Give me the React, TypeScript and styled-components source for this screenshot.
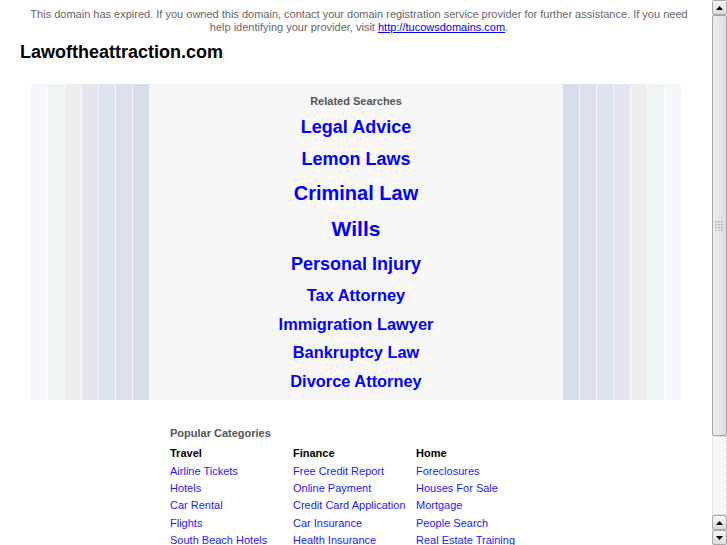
import React from "react";
import styled, { createGlobalStyle } from "styled-components";

const GlobalStyle = createGlobalStyle`
  html, body {
    margin: 0;
    padding: 0;
    overflow: hidden;
    background: #ffffff;
    font-family: "Liberation Sans", Arial, Helvetica, sans-serif;
  }
`;

const Page = styled.div`
  display: flex;
  width: 727px;
  height: 545px;
  overflow: hidden;
`;

const Main = styled.div`
  flex: 1;
  min-width: 0;
  overflow: hidden;
`;

const Notice = styled.div`
  padding: 8px 22px 0 28px;
  text-align: center;
  font-size: 11px;
  line-height: 13px;
  color: #666666;
  a {
    color: #0000ee;
    text-decoration: underline;
  }
`;

const Title = styled.h1`
  margin: 7px 0 0 0;
  padding-left: 20px;
  font-size: 18px;
  line-height: 22px;
  font-weight: bold;
  color: #000000;
`;

const Band = styled.div`
  display: flex;
  width: 650px;
  height: 316px;
  margin: 21px auto 0 auto;
`;

const Stripe = styled.div<{ $c: string; $side: "l" | "r" }>`
  width: 17px;
  flex: none;
  box-sizing: border-box;
  background: ${(p) => p.$c};
  ${(p) =>
    p.$side === "l"
      ? "border-right: 1px solid rgba(255,255,255,0.7);"
      : "border-left: 1px solid rgba(255,255,255,0.7);"}
`;

const Center = styled.div`
  flex: 1;
  background: #f7f7f7;
  display: flex;
  flex-direction: column;
  align-items: center;
  padding-top: 10px;
`;

const SectionHeading = styled.div`
  font-size: 11px;
  line-height: 14px;
  font-weight: bold;
  color: #555555;
  margin-bottom: 3px;
`;

const BigLink = styled.a<{ $size: number; $h: number }>`
  display: block;
  font-size: ${(p) => p.$size}px;
  line-height: ${(p) => p.$h}px;
  height: ${(p) => p.$h}px;
  font-weight: bold;
  color: #0000ff;
  text-decoration: none;
  white-space: nowrap;
`;

const Categories = styled.div`
  width: 372px;
  margin: 26px auto 0 auto;
`;

const CatHeading = styled.div`
  font-size: 11px;
  line-height: 14px;
  font-weight: bold;
  color: #555555;
  margin-bottom: 5px;
`;

const CatGrid = styled.div`
  display: grid;
  grid-template-columns: 123px 123px 123px;
`;

const CatColumn = styled.div`
  display: flex;
  flex-direction: column;
`;

const CatTitle = styled.div`
  font-size: 11px;
  line-height: 17.6px;
  font-weight: bold;
  color: #000000;
`;

const CatLink = styled.a`
  font-size: 11px;
  line-height: 17.4px;
  color: #1a1aff;
  text-decoration: none;
  white-space: nowrap;
`;

const ScrollBar = styled.div`
  width: 15px;
  flex: none;
  display: flex;
  flex-direction: column;
  background: #f2f2f2;
`;

const ScrollButton = styled.div`
  height: 15px;
  flex: none;
  box-sizing: border-box;
  border: 1px solid #a9a9a9;
  border-radius: 2px;
  background: linear-gradient(to bottom, #f6f6f6, #dcdcdc);
  display: flex;
  align-items: center;
  justify-content: center;
`;

const Thumb = styled.div`
  height: 421px;
  flex: none;
  box-sizing: border-box;
  border: 1px solid #a4a4aa;
  border-radius: 2px;
  background: linear-gradient(to right, #eeeef1, #dcdce2);
  display: flex;
  align-items: center;
  justify-content: center;
`;

const Track = styled.div`
  flex: 1;
  box-sizing: border-box;
  border: 1px dotted #d0d0d0;
  background: #f7f7f7;
`;

const Arrow = ({ down }: { down?: boolean }) => (
  <svg width="7" height="4" viewBox="0 0 7 4">
    {down ? (
      <polygon points="0,0 7,0 3.5,4" fill="#000" />
    ) : (
      <polygon points="0,4 7,4 3.5,0" fill="#000" />
    )}
  </svg>
);

const Grip = () => (
  <svg width="9" height="10" viewBox="0 0 9 10">
    {[0, 1, 2, 3].map((r) =>
      [0, 1, 2].map((c) => (
        <rect key={`${r}-${c}`} x={c * 3} y={r * 3} width="1.5" height="1.5" fill="#a8a8b0" />
      ))
    )}
  </svg>
);

const left = ["#f6f7fb", "#eef5f4", "#eeeeee", "#e5e5ef", "#dce5ef", "#dedfe8", "#d5dee8"];

const related: { t: string; s: number; h: number }[] = [
  { t: "Legal Advice", s: 18, h: 32 },
  { t: "Lemon Laws", s: 18, h: 33 },
  { t: "Criminal Law", s: 20, h: 35 },
  { t: "Wills", s: 21, h: 36 },
  { t: "Personal Injury", s: 18, h: 34 },
  { t: "Tax Attorney", s: 16.4, h: 29 },
  { t: "Immigration Lawyer", s: 16.4, h: 28 },
  { t: "Bankruptcy Law", s: 16.4, h: 29 },
  { t: "Divorce Attorney", s: 16.4, h: 29 },
];

const cats: { title: string; items: string[] }[] = [
  { title: "Travel", items: ["Airline Tickets", "Hotels", "Car Rental", "Flights", "South Beach Hotels"] },
  {
    title: "Finance",
    items: ["Free Credit Report", "Online Payment", "Credit Card Application", "Car Insurance", "Health Insurance"],
  },
  {
    title: "Home",
    items: ["Foreclosures", "Houses For Sale", "Mortgage", "People Search", "Real Estate Training"],
  },
];

export default function App() {
  return (
    <>
      <GlobalStyle />
      <Page>
        <Main>
          <Notice>
            This domain has expired. If you owned this domain, contact your domain registration service provider for
            further assistance. If you need help identifying your provider, visit{" "}
            <a href="#">http://tucowsdomains.com</a>.
          </Notice>
          <Title>Lawoftheattraction.com</Title>
          <Band>
            {left.map((c, i) => (
              <Stripe key={"l" + i} $c={c} $side="l" />
            ))}
            <Center>
              <SectionHeading>Related Searches</SectionHeading>
              {related.map((r) => (
                <BigLink key={r.t} href="#" $size={r.s} $h={r.h}>
                  {r.t}
                </BigLink>
              ))}
            </Center>
            {[...left].reverse().map((c, i) => (
              <Stripe key={"r" + i} $c={c} $side="r" />
            ))}
          </Band>
          <Categories>
            <CatHeading>Popular Categories</CatHeading>
            <CatGrid>
              {cats.map((col) => (
                <CatColumn key={col.title}>
                  <CatTitle>{col.title}</CatTitle>
                  {col.items.map((it) => (
                    <CatLink key={it} href="#">
                      {it}
                    </CatLink>
                  ))}
                </CatColumn>
              ))}
            </CatGrid>
          </Categories>
        </Main>
        <ScrollBar>
          <ScrollButton>
            <Arrow />
          </ScrollButton>
          <Thumb>
            <Grip />
          </Thumb>
          <Track />
          <ScrollButton>
            <Arrow />
          </ScrollButton>
          <ScrollButton>
            <Arrow down />
          </ScrollButton>
        </ScrollBar>
      </Page>
    </>
  );
}
